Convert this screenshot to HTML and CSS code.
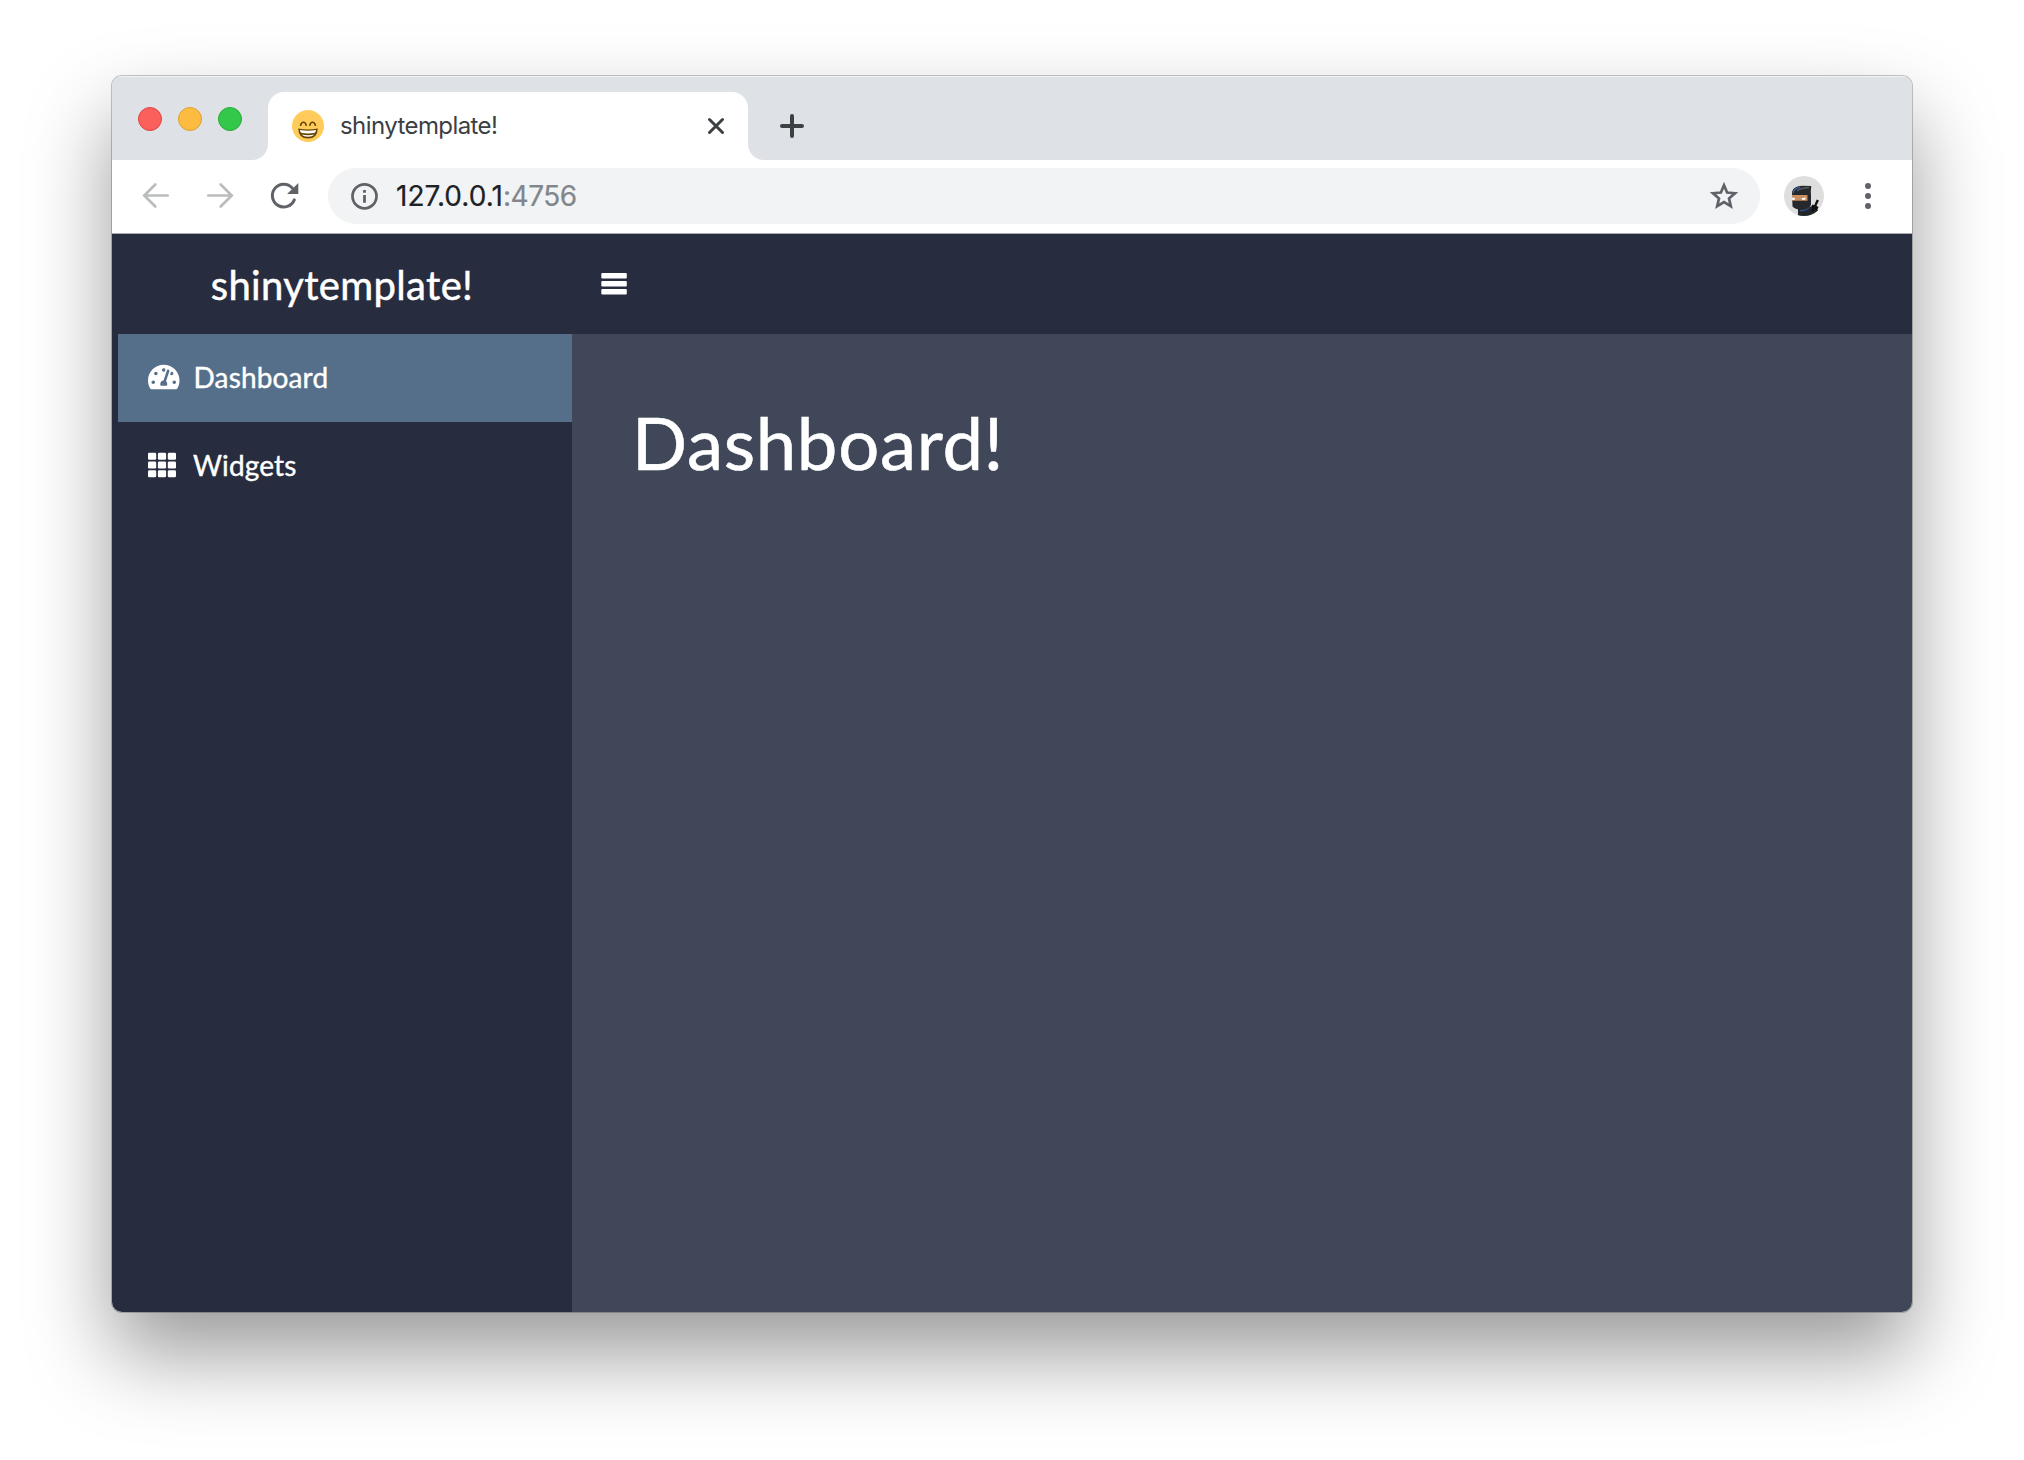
FILE: index.html
```html
<!DOCTYPE html>
<html lang="en">
<head>
<meta charset="utf-8">
<title>shinytemplate!</title>
<link rel="stylesheet" href="styles.css">
</head>
<body>
<div class="window">
  <div class="tabstrip">
    <div class="lights"><i class="light red"></i><i class="light amber"></i><i class="light green"></i></div>
    <div class="tab">
      <svg class="favicon" width="32" height="32" viewBox="0 0 32 32">
        <circle cx="16" cy="16" r="16" fill="#ffcc5b"/>
        <path d="M8.6 15.2C9.3 12.2 10.500 12.200 11.500 12.200S13.600 12.600 14.200 15.200M17.800 15.200C18.500 12.600 19.500 12.200 20.500 12.200S22.700 12.600 23.400 15.200" fill="none" stroke="#664500" stroke-width="1.600" stroke-linecap="round"/>
        <path d="M6.200 18.500Q16 20.500 25.800 18.500Q25.500 28.600 16 28.600T6.200 18.500Z" fill="#664500"/>
        <path d="M8 20Q16 21.500 24 20Q24 22.300 22.800 22.800Q16 24.400 9.200 22.800Q8 22.300 8 20ZM9.500 24.400Q16 26 22.500 24.400Q20.500 26.800 16 26.800T9.500 24.400Z" fill="#fff"/>
      </svg>
      <span class="tab-title">shinytemplate!</span>
      <svg class="close" width="20" height="20" viewBox="0 0 20 20"><path d="M3.500 3.500l13 13M16.500 3.500l-13 13" stroke="#3c4043" stroke-width="3" stroke-linecap="round"/></svg>
    </div>
    <svg class="new-tab" width="24" height="24" viewBox="0 0 24 24"><path d="M12 2v20M2 12h20" stroke="#3c4043" stroke-width="4" stroke-linecap="round"/></svg>
  </div>
  <div class="toolbar">
    <div class="nav">
      <svg width="32" height="32" viewBox="0 0 32 32"><path d="M27.700 15.500H5M15.300 4.500L4.300 15.500l11 11" class="arrow"/></svg>
      <svg width="32" height="32" viewBox="0 0 32 32"><path d="M4.300 15.500H27M16.700 4.500l11 11-11 11" class="arrow"/></svg>
      <svg width="32" height="32" viewBox="0 0 32 32"><path d="M26.300 19.900A11.400 11.400 0 1 1 24.200 7.900" fill="none" stroke="#5f6368" stroke-width="3" stroke-linecap="round"/><path d="M30.300 3v11H19.100z" fill="#5f6368"/></svg>
    </div>
    <div class="omnibox">
      <svg width="28" height="28" viewBox="0 0 28 28"><circle cx="14.500" cy="14.300" r="12" fill="none" stroke="#5f6368" stroke-width="2.700"/><path d="M13.100 8.100h2.800v2.700h-2.800zM13.100 12.900h2.800v7.800h-2.800z" fill="#5f6368"/></svg>
      <span class="url"><span class="host">127.0.0.1</span><span class="port">:4756</span></span>
      <svg class="star" width="32" height="32" viewBox="0 0 32 32"><path d="M16 5.200l3.100 7.300 7.900.7-6 5.200 1.800 7.700-6.800-4.100-6.800 4.100 1.800-7.700-6-5.200 7.900-.7z" fill="none" stroke="#5f6368" stroke-width="2.700"/></svg>
    </div>
    <svg class="avatar" width="40" height="40" viewBox="0 0 40 40">
      <defs><clipPath id="disc"><circle cx="20" cy="20" r="20"/></clipPath></defs>
      <g clip-path="url(#disc)">
        <rect width="40" height="40" fill="#dedede"/>
        <path d="M14 34Q14 30 20 31Q29 29 34 34L38 40H14z" fill="#22252a"/>
        <path d="M16 34.500Q22 35 26 30.500" stroke="#2b5797" stroke-width="1.300" fill="none"/>
        <path d="M8 16Q9.500 10 18 9.800L27.300 9.900Q26.500 15 27 20V29Q24 34 17 34Q11 33 8.500 30.500z" fill="#26282c"/>
        <path d="M9 17Q10.500 11.800 16 11.400" stroke="#3465ac" stroke-width="1.200" fill="none"/>
        <path d="M13 15Q15 12.500 25 11.500" stroke="#55585c" stroke-width="1.500" fill="none"/>
        <path d="M8 19h15.500v5.800H8z" fill="#c98e61"/>
        <path d="M8 21.500l3.200.8-.8 1.700H8.300zM17.500 22.300l4.200-.8-.5 2.200-2.700.3z" fill="#fff"/>
        <path d="M32.700 23.500l2.300 1-2.500 5 2 2-2 3-2-1-1.500 2.500-2-1 1.200-2.700-1-1.800 1.300-2 1.700.8z" fill="#111"/>
      </g>
    </svg>
    <svg class="menu-dots" width="8" height="28" viewBox="0 0 8 28" fill="#5f6368"><circle cx="4" cy="4" r="3"/><circle cx="4" cy="14" r="3"/><circle cx="4" cy="24" r="3"/></svg>
  </div>
  <header class="app-header">
    <div class="brand">shinytemplate!</div>
    <svg class="toggle" width="26" height="22" viewBox="0 0 26 22" fill="#fff"><rect y="0" x=".3" width="25.500" height="5.500" rx="1"/><rect y="8" x=".3" width="25.500" height="5.500" rx="1"/><rect y="16" x=".3" width="25.500" height="5.500" rx="1"/></svg>
  </header>
  <div class="app-body">
    <nav class="sidebar">
      <a class="item active">
        <svg width="31.500" height="28" viewBox="0 0 576 512"><path fill="#fff" d="M288 32C128.940 32 0 160.940 0 320c0 52.800 14.250 102.260 39.060 144.800 5.610 9.620 16.300 15.200 27.440 15.200h443c11.140 0 21.830-5.580 27.440-15.200C561.750 422.260 576 372.800 576 320c0-159.060-128.940-288-288-288zm0 64c14.710 0 26.580 10.130 30.320 23.650-1.110 2.260-2.640 4.230-3.450 6.670l-9.220 27.670c-5.130 3.490-10.970 6.010-17.640 6.010-17.670 0-32-14.330-32-32S270.330 96 288 96zM96 384c-17.670 0-32-14.330-32-32s14.330-32 32-32 32 14.330 32 32-14.330 32-32 32zm48-160c-17.670 0-32-14.330-32-32s14.330-32 32-32 32 14.330 32 32-14.330 32-32 32zm246.770-72.410l-61.330 184C343.130 347.330 352 364.540 352 384c0 11.720-3.380 22.550-8.880 32H232.880c-5.500-9.450-8.880-20.280-8.880-32 0-33.940 26.500-61.430 59.900-63.590l61.340-184.010c4.170-12.560 17.730-19.450 30.360-15.170 12.570 4.190 19.350 17.790 15.170 30.360zm14.660 57.200l15.520-46.550c3.470-1.290 7.130-2.230 11.050-2.230 17.670 0 32 14.330 32 32s-14.330 32-32 32c-11.380-.010-20.890-6.280-26.570-15.220zM480 384c-17.670 0-32-14.330-32-32s14.330-32 32-32 32 14.330 32 32-14.330 32-32 32z"/></svg>
        <span>Dashboard</span>
      </a>
      <a class="item">
        <svg width="28" height="28" viewBox="0 0 28 28" fill="#fff"><rect x="0" y="1.700" width="8.200" height="7" rx="1.300"/><rect x="9.900" y="1.700" width="8.200" height="7" rx="1.300"/><rect x="19.800" y="1.700" width="8.200" height="7" rx="1.300"/><rect x="0" y="10.500" width="8.200" height="7" rx="1.300"/><rect x="9.900" y="10.500" width="8.200" height="7" rx="1.300"/><rect x="19.800" y="10.500" width="8.200" height="7" rx="1.300"/><rect x="0" y="19.300" width="8.200" height="7" rx="1.300"/><rect x="9.900" y="19.300" width="8.200" height="7" rx="1.300"/><rect x="19.800" y="19.300" width="8.200" height="7" rx="1.300"/></svg>
        <span class="wide-gap">Widgets</span>
      </a>
    </nav>
    <main class="content"><h1>Dashboard!</h1></main>
  </div>
</div>
</body>
</html>
```
FILE: styles.css
```css
* { box-sizing: border-box; }
body { margin: 0; width: 2024px; height: 1460px; padding: 76px 112px 0; background: #fff; overflow: hidden; }
svg { display: block; flex: none; }

.window {
  width: 1800px; height: 1236px; display: flex; flex-direction: column;
  border-radius: 10px; overflow: hidden; background: #fff;
  box-shadow: 0 0 0 1px rgba(0, 0, 0, .22), 0 42px 84px rgba(0, 0, 0, .4);
}

.tabstrip { height: 84px; display: flex; align-items: flex-end; background: #dee1e6; box-shadow: inset 0 2px 0 -1px #f3f4f6; flex: none; }
.lights { width: 156px; height: 84px; padding: 31px 0 0 26px; display: flex; gap: 16px; }
.light { width: 24px; height: 24px; border-radius: 50%; border: 1px solid; }
.red { background: #fc605c; border-color: #e0443e; }
.amber { background: #fdbc40; border-color: #dea034; }
.green { background: #34c84a; border-color: #27aa35; }
.tab { position: relative; width: 480px; height: 68px; padding: 0 22px 0 24px; display: flex; align-items: center; background: #fff; border-radius: 16px 16px 0 0; }
.tab::before, .tab::after { content: ""; position: absolute; bottom: 0; width: 16px; height: 16px; }
.tab::before { left: -16px; background: radial-gradient(circle at 0 0, transparent 15.5px, #fff 16.500px); }
.tab::after { right: -16px; background: radial-gradient(circle at 100% 0, transparent 15.5px, #fff 16.500px); }
.tab-title { margin-left: 16px; font: 24px/32px Inter, "Liberation Sans", sans-serif; letter-spacing: -.58px; color: #3c4043; white-space: nowrap; }
.close { margin-left: auto; }
.new-tab { margin: 0 0 22px 32px; }

.toolbar { height: 74px; padding: 0 40px 1px 28px; display: flex; align-items: center; background: #fff; border-bottom: 1px solid #a9abb0; flex: none; }
.nav { display: flex; gap: 32px; width: 188px; }
.arrow { fill: none; stroke: #babcbe; stroke-width: 2.700; stroke-linecap: round; }
.omnibox { width: 1432px; height: 56px; padding: 0 20px 0 22px; display: flex; align-items: center; background: #f1f3f4; border-radius: 28px; }
.url { margin-left: 18px; font: 28px/40px Inter, "Liberation Sans", sans-serif; letter-spacing: .05px; color: #202124; -webkit-text-stroke: .2px; white-space: nowrap; }
.port { color: #80868b; letter-spacing: -.45px; }
.star { margin-left: auto; }
.avatar { margin-left: 24px; }
.menu-dots { margin-left: auto; }

.app-header { height: 100px; display: flex; align-items: center; background: #272c3e; flex: none; }
.brand { width: 460px; padding-top: 2px; text-align: center; font: 40px/98px Lato, sans-serif; letter-spacing: .35px; -webkit-text-stroke: .5px #fff; color: #fff; }
.toggle { margin: 0 0 0 29px; }
.app-body { flex: 1; display: flex; }
.sidebar { width: 460px; padding-left: 6px; background: #272c3e; }
.item { height: 88px; padding: 0 0 2px 30px; display: flex; align-items: center; color: #fff; font: 28px/40px Lato, sans-serif; letter-spacing: .15px; }
.item.active { background: #556f8a; }
.item span { margin-left: 14px; -webkit-text-stroke: .4px #fff; }
.item .wide-gap { margin-left: 17px; }
.content { flex: 1; padding: 68px 60px; background: #3f4759; }
h1 { margin: 0; font: 400 72.500px/80px Lato, sans-serif; letter-spacing: .7px; -webkit-text-stroke: .6px #fff; color: #fff; }
```
